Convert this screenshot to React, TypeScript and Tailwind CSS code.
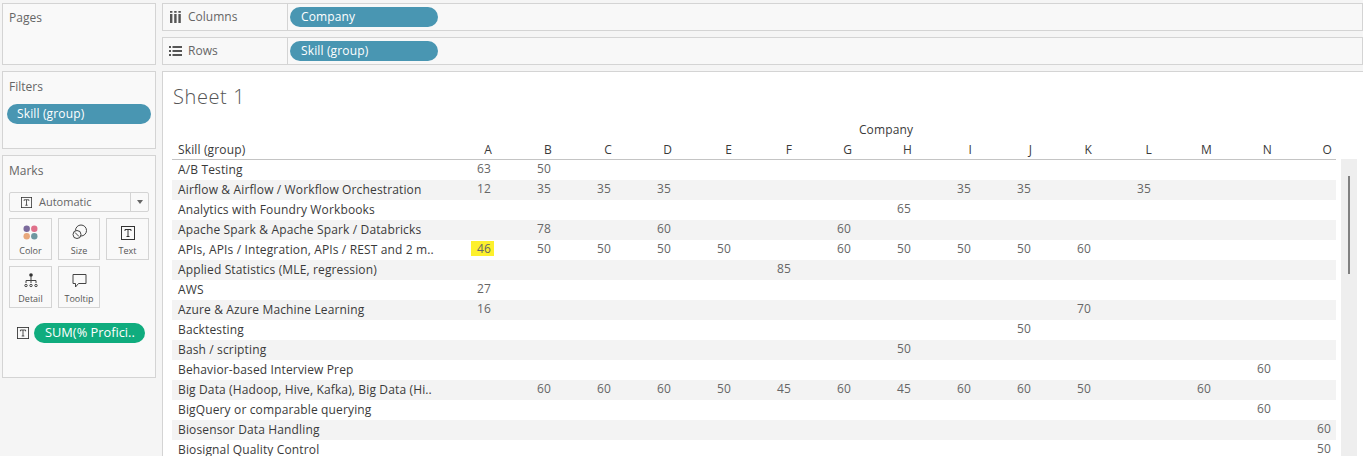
const font = "font-['Open_Sans','Liberation_Sans',sans-serif]";

const columns = ["A", "B", "C", "D", "E", "F", "G", "H", "I", "J", "K", "L", "M", "N", "O"];

const rows: { skill: string; values: Record<string, number> }[] = [
  { skill: "A/B Testing", values: { A: 63, B: 50 } },
  { skill: "Airflow & Airflow / Workflow Orchestration", values: { A: 12, B: 35, C: 35, D: 35, I: 35, J: 35, L: 35 } },
  { skill: "Analytics with Foundry Workbooks", values: { H: 65 } },
  { skill: "Apache Spark & Apache Spark / Databricks", values: { B: 78, D: 60, G: 60 } },
  { skill: "APIs, APIs / Integration, APIs / REST and 2 m..", values: { A: 46, B: 50, C: 50, D: 50, E: 50, G: 60, H: 50, I: 50, J: 50, K: 60 } },
  { skill: "Applied Statistics (MLE, regression)", values: { F: 85 } },
  { skill: "AWS", values: { A: 27 } },
  { skill: "Azure & Azure Machine Learning", values: { A: 16, K: 70 } },
  { skill: "Backtesting", values: { J: 50 } },
  { skill: "Bash / scripting", values: { H: 50 } },
  { skill: "Behavior-based Interview Prep", values: { N: 60 } },
  { skill: "Big Data (Hadoop, Hive, Kafka), Big Data (Hi..", values: { B: 60, C: 60, D: 60, E: 50, F: 45, G: 60, H: 45, I: 60, J: 60, K: 50, M: 60 } },
  { skill: "BigQuery or comparable querying", values: { N: 60 } },
  { skill: "Biosensor Data Handling", values: { O: 60 } },
  { skill: "Biosignal Quality Control", values: { O: 50 } },
];

const TextMarkIcon = ({ size = 14 }: { size?: number }) => (
  <svg width={size} height={size} viewBox="0 0 14 14" fill="none" stroke="#333" strokeWidth="1">
    <rect x="0.5" y="0.5" width="13" height="13" />
    <path d="M4 5V3.5H10V5M7 3.5V10.5M5.5 10.5H8.5" />
  </svg>
);

const Shelf = ({ label, pill, icon }: { label: string; pill: string; icon: React.ReactNode }) => (
  <div className="flex h-[28px] shrink-0 items-center border border-[#d4d4d4] bg-[#f8f8f8]">
    <div className="flex h-full w-[125px] items-center gap-[6px] border-r border-[#d4d4d4] pl-[6px] text-[12px] text-[#666]">
      <span className="flex w-[13px] justify-center">{icon}</span>
      {label}
    </div>
    <div className="ml-[2px] flex h-[20px] w-[148px] items-center rounded-full bg-[#4996b2] pl-[11px] text-[12px] tracking-[0.14px] text-white">
      {pill}
    </div>
  </div>
);

const MarkButton = ({ label, icon }: { label: string; icon: React.ReactNode }) => (
  <div className="flex h-[42px] flex-col items-center border border-[#d4d4d4] text-[9px] text-[#555]">
    <div className="flex h-[21px] items-end">{icon}</div>
    <span className="mt-[5px] leading-[12px]">{label}</span>
  </div>
);

export default function App() {
  return (
    <div className={`${font} flex h-[456px] w-[1363px] gap-[6px] overflow-hidden bg-[#f5f5f5] pl-[2px] pt-[3px]`}>
      {/* left cards */}
      <aside className="flex w-[154px] shrink-0 flex-col gap-[6px]">
        <div className="h-[62px] border border-[#d4d4d4] bg-[#f9f9f9] px-[6px] pt-[5px] text-[12px] text-[#666]">
          Pages
        </div>
        <div className="h-[78px] border border-[#d4d4d4] bg-[#f9f9f9] px-[4px] pt-[6px] text-[12px] text-[#666]">
          <div className="pl-[2px]">Filters</div>
          <div className="mt-[8px] flex h-[20px] items-center rounded-full bg-[#4996b2] pl-[10px] tracking-[0.14px] text-white">
            Skill (group)
          </div>
        </div>
        <div className="h-[223px] border border-[#d4d4d4] bg-[#f9f9f9] px-[6px] pt-[6px] text-[12px] text-[#666]">
          <div>Marks</div>
          <div className="mt-[12px] flex h-[20px] w-[140px] items-center rounded-[2px] border border-[#d4d4d4] text-[11px]">
            <div className="flex flex-1 items-center gap-[7px] pl-[11px]">
              <TextMarkIcon size={11} />
              Automatic
            </div>
            <div className="flex h-full w-[18px] items-center justify-center border-l border-[#d4d4d4]">
              <span className="h-0 w-0 border-x-[3px] border-t-[4px] border-x-transparent border-t-[#666]" />
            </div>
          </div>
          <div className="mt-[6px] grid w-[140px] grid-cols-[43px_42px_43px] gap-x-[6px] gap-y-[6px]">
            <MarkButton
              label="Color"
              icon={
                <svg width="15" height="15" viewBox="0 0 15 15">
                  <circle cx="3.7" cy="3.7" r="3.2" fill="#7b6a9c" />
                  <circle cx="11.3" cy="3.7" r="3.2" fill="#e0708a" />
                  <circle cx="3.7" cy="11.3" r="3.2" fill="#e8a87c" />
                  <circle cx="11.3" cy="11.3" r="3.2" fill="#6f97a0" />
                </svg>
              }
            />
            <MarkButton
              label="Size"
              icon={
                <svg width="15" height="16" viewBox="0 0 15 16" fill="none" stroke="#444" strokeWidth="1">
                  <circle cx="9" cy="6.5" r="5.5" />
                  <circle cx="5" cy="10.5" r="4" fill="#f9f9f9" />
                  <path d="M3 8.5L7 12.5" />
                </svg>
              }
            />
            <MarkButton label="Text" icon={<TextMarkIcon />} />
            <MarkButton
              label="Detail"
              icon={
                <svg width="14" height="15" viewBox="0 0 14 15" fill="none" stroke="#444" strokeWidth="1">
                  <circle cx="7" cy="2" r="1.8" fill="#333" stroke="none" />
                  <path d="M7 3V10M2 10V7.5H12V10" />
                  <circle cx="2" cy="12.5" r="1.2" />
                  <circle cx="7" cy="12.5" r="1.2" />
                  <circle cx="12" cy="12.5" r="1.2" />
                </svg>
              }
            />
            <MarkButton
              label="Tooltip"
              icon={
                <svg width="15" height="15" viewBox="0 0 15 15" fill="none" stroke="#444" strokeWidth="1">
                  <path d="M1 1.5H14V10.5H6.5L3.5 14V10.5H1Z" />
                </svg>
              }
            />
          </div>
          <div className="mt-[15px] flex items-center gap-[5px] pl-[8px]">
            <TextMarkIcon size={12} />
            <div className="flex h-[20px] w-[111px] items-center rounded-full bg-[#10ac7e] pl-[11px] text-[12.8px] whitespace-nowrap text-white">
              SUM(% Profici..
            </div>
          </div>
        </div>
      </aside>

      {/* shelves and view */}
      <main className="flex min-w-0 flex-1 flex-col gap-[6px]">
        <Shelf
          label="Columns"
          pill="Company"
          icon={
            <svg width="11" height="12" viewBox="0 0 11 12" fill="#555">
              <rect x="0" y="3" width="2.4" height="9" />
              <rect x="4.2" y="3" width="2.4" height="9" />
              <rect x="8.4" y="3" width="2.4" height="9" />
              <rect x="0" y="0" width="2.4" height="1.8" />
              <rect x="4.2" y="0" width="2.4" height="1.8" />
              <rect x="8.4" y="0" width="2.4" height="1.8" />
            </svg>
          }
        />
        <Shelf
          label="Rows"
          pill="Skill (group)"
          icon={
            <svg width="13" height="10" viewBox="0 0 13 10" fill="#555">
              <rect x="0" y="0" width="2" height="2" />
              <rect x="3.5" y="0" width="9.5" height="2" />
              <rect x="0" y="4" width="2" height="2" />
              <rect x="3.5" y="4" width="9.5" height="2" />
              <rect x="0" y="8" width="2" height="2" />
              <rect x="3.5" y="8" width="9.5" height="2" />
            </svg>
          }
        />

        <section className="min-h-0 flex-1 border-t border-l border-[#d4d4d4] bg-white pl-[9px]">
          <h1 className="pt-[11px] pl-[1px] text-[20px] leading-[28px] font-light tracking-[0.6px] text-[#555]">Sheet 1</h1>

          <div className="relative mt-[10px] w-[1164px] text-[12px] tracking-[0.14px] text-[#3a3a3a]">
            <div className="h-[19px] pl-[260px] text-center leading-[17px]">
              <span className="relative left-[2px]">Company</span>
            </div>
            <div className="grid h-[20px] grid-cols-[260px_repeat(15,60px)] items-center border-b border-[#c4c4c4] leading-[18px]">
              <span className="pl-[6px]">Skill (group)</span>
              {columns.map((c) => (
                <span key={c} className="text-right">
                  {c}
                </span>
              ))}
            </div>

            {rows.map((row, i) => (
              <div
                key={row.skill}
                className={`grid h-[20px] grid-cols-[260px_repeat(15,60px)] items-center ${i % 2 === 1 ? "bg-[#f3f3f3]" : "bg-white"}`}
              >
                <span className="pl-[6px] whitespace-nowrap">{row.skill}</span>
                {columns.map((c) => {
                  const v = row.values[c];
                  const hi = row.skill.startsWith("APIs") && c === "A";
                  return (
                    <span key={c} className="flex justify-end pr-[1px] pb-[2px] text-[#666]">
                      {v !== undefined && (
                        <span className={hi ? "relative -top-[1px] -mr-[3px] bg-[#fdf02c] pr-[3px] pl-[6px] leading-[15px]" : ""}>{v}</span>
                      )}
                    </span>
                  );
                })}
              </div>
            ))}

            {/* scrollbar */}
            <div className="absolute top-[38px] left-[1169px] h-[300px] w-[16px] bg-[#eeeeee]">
              <div className="absolute top-[17px] left-[7px] h-[98px] w-[2px] bg-[#808080]" />
            </div>
          </div>
        </section>
      </main>
    </div>
  );
}
